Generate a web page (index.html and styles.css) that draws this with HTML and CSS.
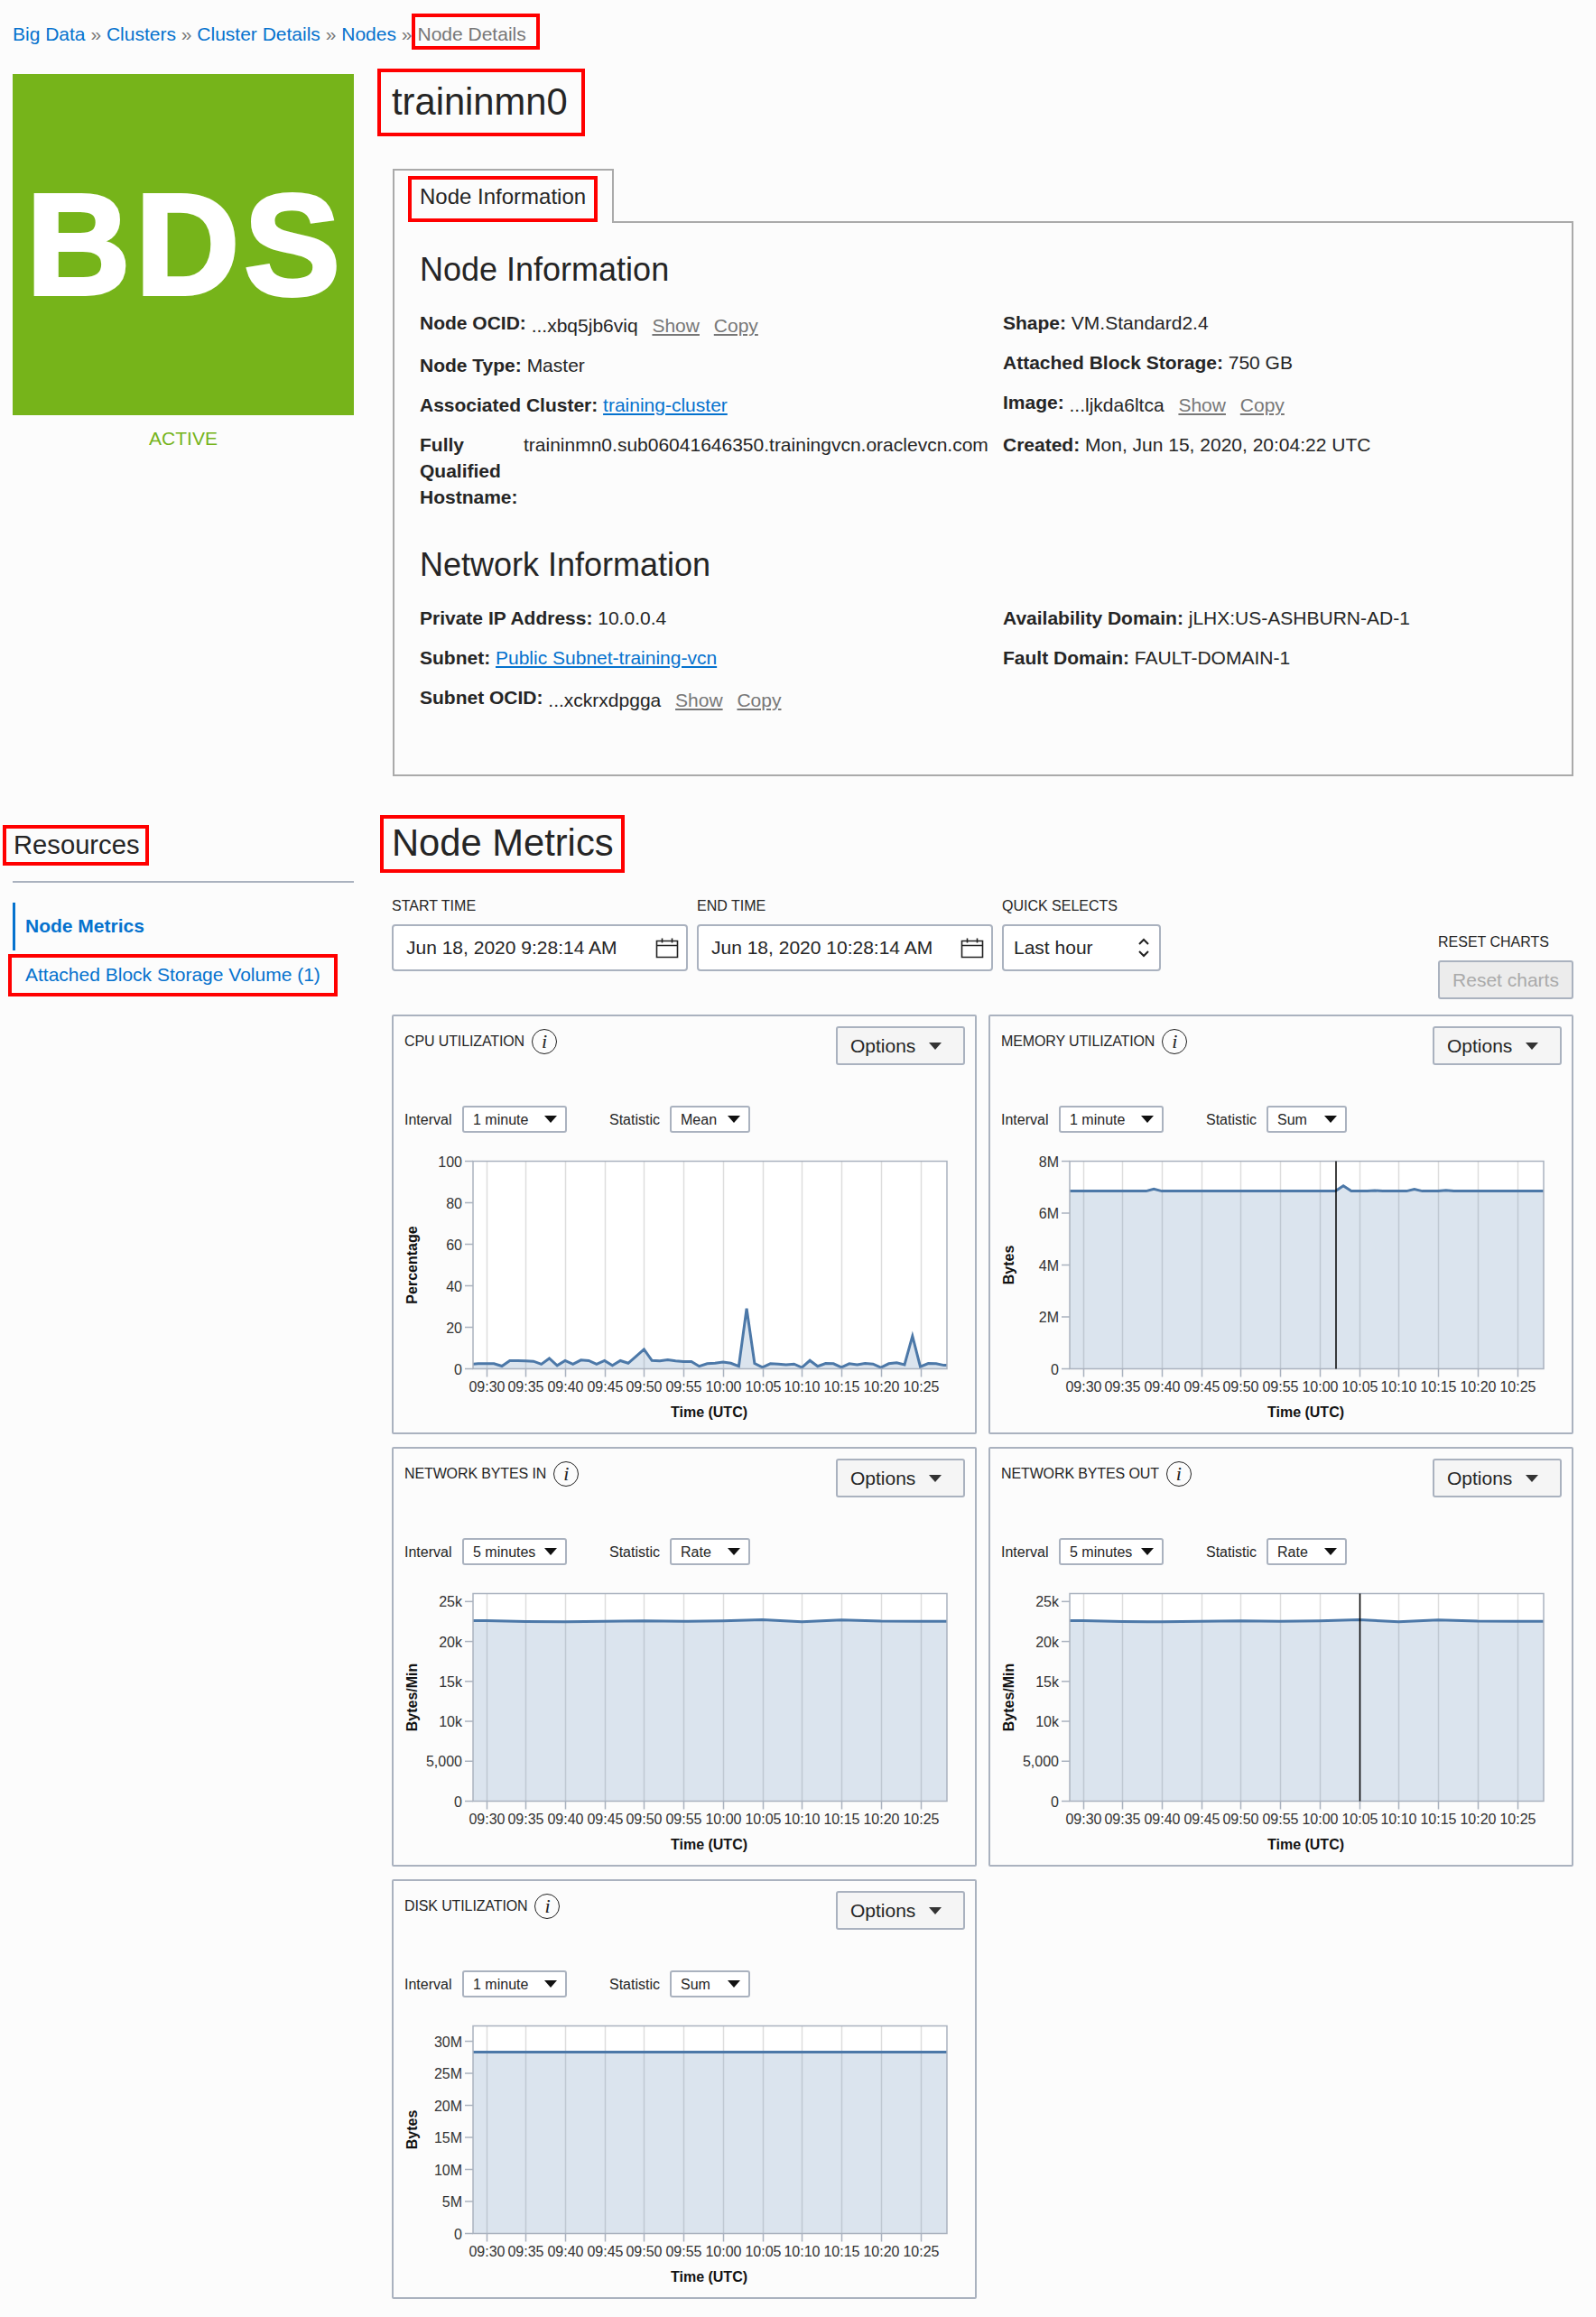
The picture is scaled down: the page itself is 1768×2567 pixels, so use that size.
FILE: index.html
```html
<!DOCTYPE html>
<html lang="en">
<head>
    <meta charset="UTF-8">
    <title>Node Details</title>
    <link rel="stylesheet" href="styles.css">
</head>
<body>
    <div class="breadcrumb">
        <a href="#">Big Data</a> <span class="sep">»</span>
        <a href="#">Clusters</a> <span class="sep">»</span>
        <a href="#">Cluster Details</a> <span class="sep">»</span>
        <a href="#">Nodes</a> <span class="sep">»</span><span class="mark crumb-current">Node Details</span>
    </div>

    <div class="section section-top">
        <div class="side">
            <div class="logo">BDS</div>
            <div class="status">ACTIVE</div>
        </div>
        <div class="content">
            <h1 class="mark page-title">traininmn0</h1>
            <div class="tab"><span class="mark tab-label">Node Information</span></div>
            <div class="tab-panel">
                <h2>Node Information</h2>
                <div class="info-grid">
                    <div>
                        <div class="row"><b>Node OCID:</b> <span class="ocid">...xbq5jb6viq <a class="action" href="#">Show</a> <a class="action" href="#">Copy</a></span></div>
                        <div class="row"><b>Node Type:</b> Master</div>
                        <div class="row"><b>Associated Cluster:</b> <a class="link" href="#">training-cluster</a></div>
                        <div class="row row-host">
                            <b class="host-label">Fully Qualified Hostname:</b>
                            <span>traininmn0.sub06041646350.trainingvcn.oraclevcn.com</span>
                        </div>
                    </div>
                    <div>
                        <div class="row"><b>Shape:</b> VM.Standard2.4</div>
                        <div class="row"><b>Attached Block Storage:</b> 750 GB</div>
                        <div class="row"><b>Image:</b> <span class="ocid">...ljkda6ltca <a class="action" href="#">Show</a> <a class="action" href="#">Copy</a></span></div>
                        <div class="row"><b>Created:</b> Mon, Jun 15, 2020, 20:04:22 UTC</div>
                    </div>
                </div>
                <h2 class="network-title">Network Information</h2>
                <div class="info-grid">
                    <div>
                        <div class="row"><b>Private IP Address:</b> 10.0.0.4</div>
                        <div class="row"><b>Subnet:</b> <a class="link" href="#">Public Subnet-training-vcn</a></div>
                        <div class="row"><b>Subnet OCID:</b> <span class="ocid">...xckrxdpgga <a class="action" href="#">Show</a> <a class="action" href="#">Copy</a></span></div>
                    </div>
                    <div>
                        <div class="row"><b>Availability Domain:</b> jLHX:US-ASHBURN-AD-1</div>
                        <div class="row"><b>Fault Domain:</b> FAULT-DOMAIN-1</div>
                    </div>
                </div>
            </div>
        </div>
    </div>

    <div class="section section-metrics">
        <div class="side">
            <h3 class="mark resources-title">Resources</h3>
            <div class="resources-nav">
                <a class="nav-item nav-active" href="#">Node Metrics</a>
                <a class="mark nav-item nav-marked" href="#">Attached Block Storage Volume (1)</a>
            </div>
        </div>
        <div class="content">
            <h1 class="mark page-title metrics-title">Node Metrics</h1>
            <div class="filters">
                <div class="filter filter-date">
                    <label>START TIME</label>
                    <div class="field">Jun 18, 2020 9:28:14 AM
                        <svg class="cal" width="26" height="24" viewBox="0 0 26 24"><path d="M1.5 4.5h23v18h-23zM1.5 9.5h23M7.5 1.5v5M18.5 1.5v5" fill="none" stroke="#222" stroke-width="1.6"/></svg>
                    </div>
                </div>
                <div class="filter filter-date">
                    <label>END TIME</label>
                    <div class="field">Jun 18, 2020 10:28:14 AM
                        <svg class="cal" width="26" height="24" viewBox="0 0 26 24"><path d="M1.5 4.5h23v18h-23zM1.5 9.5h23M7.5 1.5v5M18.5 1.5v5" fill="none" stroke="#222" stroke-width="1.6"/></svg>
                    </div>
                </div>
                <div class="filter filter-quick">
                    <label>QUICK SELECTS</label>
                    <div class="field">Last hour
                        <svg class="updown" width="14" height="22" viewBox="0 0 14 22"><path d="M2 7l5-5 5 5M2 15l5 5 5-5" fill="none" stroke="#222" stroke-width="2"/></svg>
                    </div>
                </div>
                <div class="filter filter-reset">
                    <label>RESET CHARTS</label>
                    <button class="reset-btn">Reset charts</button>
                </div>
            </div>

            <div class="chart-grid">
                <div class="card">
                    <div class="card-head">
                        <div class="card-title">CPU UTILIZATION <span class="info">i</span></div>
                        <button class="options-btn">Options <span class="caret"></span></button>
                    </div>
                    <div class="card-controls">
                        <span class="ctl-label">Interval</span>
                        <div class="select select-interval">1 minute <span class="caret"></span></div>
                        <span class="ctl-label ctl-stat">Statistic</span>
                        <div class="select select-stat">Mean <span class="caret"></span></div>
                    </div>
                    <svg class="chart" id="chart-cpu" width="620" height="310"></svg>
                </div>
                <div class="card">
                    <div class="card-head">
                        <div class="card-title">MEMORY UTILIZATION <span class="info">i</span></div>
                        <button class="options-btn">Options <span class="caret"></span></button>
                    </div>
                    <div class="card-controls">
                        <span class="ctl-label">Interval</span>
                        <div class="select select-interval">1 minute <span class="caret"></span></div>
                        <span class="ctl-label ctl-stat">Statistic</span>
                        <div class="select select-stat">Sum <span class="caret"></span></div>
                    </div>
                    <svg class="chart" id="chart-memory" width="620" height="310"></svg>
                </div>
                <div class="card">
                    <div class="card-head">
                        <div class="card-title">NETWORK BYTES IN <span class="info">i</span></div>
                        <button class="options-btn">Options <span class="caret"></span></button>
                    </div>
                    <div class="card-controls">
                        <span class="ctl-label">Interval</span>
                        <div class="select select-interval">5 minutes <span class="caret"></span></div>
                        <span class="ctl-label ctl-stat">Statistic</span>
                        <div class="select select-stat">Rate <span class="caret"></span></div>
                    </div>
                    <svg class="chart" id="chart-net-in" width="620" height="310"></svg>
                </div>
                <div class="card">
                    <div class="card-head">
                        <div class="card-title">NETWORK BYTES OUT <span class="info">i</span></div>
                        <button class="options-btn">Options <span class="caret"></span></button>
                    </div>
                    <div class="card-controls">
                        <span class="ctl-label">Interval</span>
                        <div class="select select-interval">5 minutes <span class="caret"></span></div>
                        <span class="ctl-label ctl-stat">Statistic</span>
                        <div class="select select-stat">Rate <span class="caret"></span></div>
                    </div>
                    <svg class="chart" id="chart-net-out" width="620" height="310"></svg>
                </div>
                <div class="card">
                    <div class="card-head">
                        <div class="card-title">DISK UTILIZATION <span class="info">i</span></div>
                        <button class="options-btn">Options <span class="caret"></span></button>
                    </div>
                    <div class="card-controls">
                        <span class="ctl-label">Interval</span>
                        <div class="select select-interval">1 minute <span class="caret"></span></div>
                        <span class="ctl-label ctl-stat">Statistic</span>
                        <div class="select select-stat">Sum <span class="caret"></span></div>
                    </div>
                    <svg class="chart" id="chart-disk" width="620" height="310"></svg>
                </div>
            </div>
        </div>
    </div>

    <script src="charts.js"></script>
</body>
</html>
```

FILE: styles.css
```css
/* General Reset */
* {
    margin: 0;
    padding: 0;
    box-sizing: border-box;
}
body {
    font-family: "Liberation Sans", Arial, sans-serif;
    font-size: 21px;
    line-height: 29px;
    background-color: #fcfcfc;
    color: #252525;
    padding: 15px 25px 0 14px;
}
a {
    color: #0572ce;
    text-decoration: none;
}
h1, h2, h3 {
    font-weight: normal;
}
/* Red annotation boxes */
.mark {
    border: 4px solid #ff0000;
}
/* Breadcrumb */
.breadcrumb {
    height: 40px;
    white-space: nowrap;
}
.sep {
    color: #777;
}
.crumb-current {
    display: inline-block;
    color: #777;
    height: 40px;
    padding: 4px 11px 3px 2px;
}
/* Page sections */
.section {
    display: flex;
    gap: 43px;
}
.side {
    width: 378px;
    flex-shrink: 0;
}
.content {
    flex: 1;
    min-width: 0;
}
.section-top {
    margin-top: 21px;
}
.section-top .side {
    padding-top: 6px;
}
.logo {
    width: 378px;
    height: 378px;
    background-color: #76b41a;
    color: #fff;
    font-size: 160px;
    font-weight: bold;
    letter-spacing: 5px;
    -webkit-text-stroke: 4px #fff;
    line-height: 378px;
    padding-left: 5px;
    text-align: center;
}
.status {
    color: #76b41a;
    text-align: center;
    margin-top: 11px;
}
.page-title {
    display: inline-block;
    font-size: 41.7px;
    line-height: 66px;
    padding: 0 15px 0 12px;
    margin-left: -17px;
    height: 75px;
}
/* Tab */
.tab {
    display: block;
    width: 245px;
    height: 60px;
    margin-top: 36px;
    padding: 6px 0 0 15px;
    border: 2px solid #aaa;
    border-bottom: none;
    background-color: #fcfcfc;
    position: relative;
    z-index: 1;
    margin-bottom: -2px;
}
.tab-label {
    display: block;
    width: 210px;
    height: 51px;
    font-size: 24px;
    line-height: 38px;
    padding-left: 9px;
    white-space: nowrap;
}
.tab-panel {
    border: 2px solid #aaa;
    padding: 30px 28px 53px;
}
.tab-panel h2 {
    font-size: 36px;
    line-height: 44px;
    margin-bottom: 22px;
}
.tab-panel h2.network-title {
    margin-top: 24px;
    margin-bottom: 22px;
}
.info-grid {
    display: grid;
    grid-template-columns: 646px 1fr;
}
.row {
    margin-bottom: 15px;
}
.row b {
    font-weight: bold;
}
.ocid {
    vertical-align: -3px;
}
.action {
    color: #777;
    text-decoration: underline;
    margin-left: 10px;
}
.link {
    text-decoration: underline;
}
.row-host {
    display: flex;
}
.host-label {
    width: 115px;
    flex-shrink: 0;
}
/* Metrics section */
.section-metrics {
    margin-top: 43px;
}
.section-metrics .side {
    padding-top: 11px;
}
.resources-title {
    display: inline-block;
    font-size: 29.2px;
    line-height: 37px;
    height: 45px;
    padding: 0 6px 0 8px;
    margin-left: -11px;
}
.resources-nav {
    margin-top: 17px;
    padding-top: 22px;
    border-top: 2px solid #aab2bf;
}
.nav-item {
    display: block;
    padding-left: 14px;
}
.nav-active {
    height: 53px;
    line-height: 51px;
    border-left: 3px solid #0572ce;
    font-weight: bold;
    padding-left: 11px;
}
.nav-marked {
    width: 365px;
    height: 47px;
    line-height: 37px;
    margin: 4px 0 0 -5px;
    padding-left: 15px;
}
.page-title.metrics-title {
    height: 64px;
    line-height: 54px;
    display: inline-block;
    vertical-align: top;
    margin-left: -14px;
    padding: 0 8px 0 9px;
}
.filters {
    display: flex;
    gap: 10px;
    margin: 27px 0 0 -1px;
}
.filter label {
    display: block;
    font-size: 16px;
    line-height: 20px;
    margin-bottom: 10px;
}
.filter-date {
    width: 328px;
}
.filter-quick {
    width: 176px;
}
.filter-reset {
    margin-left: auto;
    width: 150px;
    padding-top: 40px;
}
.filter-reset label {
    margin-bottom: 10px;
    white-space: nowrap;
}
.field {
    height: 52px;
    border: 2px solid #aab2bf;
    border-radius: 4px;
    background-color: #fff;
    padding: 0 8px 0 14px;
    line-height: 50px;
    display: flex;
    justify-content: space-between;
    align-items: center;
}
.filter-quick .field {
    padding: 0 10px 0 11px;
}
.reset-btn {
    display: block;
    width: 150px;
    height: 43px;
    font: inherit;
    color: #aaa;
    background-color: #ececec;
    border: 2px solid #aab2bf;
    border-radius: 3px;
}
/* Chart cards */
.chart-grid {
    display: grid;
    grid-template-columns: 648px 648px;
    gap: 14px 13px;
    margin: 17px 0 0 -1px;
}
.card {
    height: 465px;
    border: 2px solid #aab2bf;
    border-radius: 2px;
    padding: 11px 11px 0 12px;
}
.card-head {
    display: flex;
    justify-content: space-between;
    align-items: flex-start;
}
.card-title {
    font-size: 16px;
    letter-spacing: -0.12px;
    line-height: 28px;
    margin-top: 3px;
    display: flex;
    align-items: center;
    gap: 8px;
}
.info {
    width: 28px;
    height: 28px;
    border: 1.5px solid #222;
    border-radius: 50%;
    font-family: "Liberation Serif", serif;
    font-style: italic;
    font-size: 22px;
    line-height: 25px;
    text-align: center;
}
.options-btn {
    width: 143px;
    height: 43px;
    font: inherit;
    color: #252525;
    background-color: #f5f5f5;
    border: 2px solid #aab2bf;
    border-radius: 3px;
    padding: 0 14px;
    display: flex;
    gap: 15px;
    align-items: center;
}
.caret {
    width: 0;
    height: 0;
    border-left: 7px solid transparent;
    border-right: 7px solid transparent;
    border-top: 8px solid #111;
}
.options-btn .caret {
    border-top-color: #333;
}
.card-controls {
    display: flex;
    align-items: center;
    height: 30px;
    margin-top: 45px;
    font-size: 16px;
}
.ctl-label {
    white-space: nowrap;
}
.ctl-label:first-child {
    width: 64px;
}
.ctl-stat {
    width: 67px;
    margin-left: 47px;
}
.select {
    height: 30px;
    border: 2px solid #aab2bf;
    border-radius: 3px;
    background-color: #fff;
    padding: 0 9px 0 10px;
    display: flex;
    justify-content: space-between;
    align-items: center;
}
.select-interval {
    width: 116px;
}
.select-stat {
    width: 89px;
}
.chart {
    display: block;
    margin-top: 14px;
}
.tick-label {
    font-size: 16px;
    fill: #333;
}
.axis-title {
    font-size: 16px;
    font-weight: bold;
    fill: #111;
}
```

FILE: charts.js
```js
// Draws the five metric charts (same x axis, 09:28 to 10:28)
const PLOT_X = 76, PLOT_W = 525, PLOT_Y = 17.5, PLOT_H = 230;
const MIN_PX = 8.746;
const TIME_LABELS = ['09:30', '09:35', '09:40', '09:45', '09:50', '09:55',
    '10:00', '10:05', '10:10', '10:15', '10:20', '10:25'];

function minuteX(m) {
    return PLOT_X + 14.5 + (m - 2) * MIN_PX;
}

function everyMinute(values) {
    return values.map((v, i) => [i, v]);
}

const cpuValues = [2.2, 2.5, 2.5, 2.5, 1.3, 3.9, 3.9, 3.8, 3.6, 2.2, 5, 1.6, 3.9, 2.2, 4.2, 3.9,
    2.2, 3.9, 1.6, 3.9, 2.7, 6, 9.4, 4, 3.8, 4.3, 3.8, 3.5, 3.5, 1.2, 2.5, 2.7, 3.2, 2.7, 1.2,
    29, 2.6, 0.7, 2.5, 2.3, 2, 2.3, 0.6, 4, 1.2, 2.6, 2.5, 0.7, 2.5, 1.9, 2.6, 2.3, 0.6, 2.5,
    2.9, 2, 15.8, 1, 2.6, 2.5, 1.7];

const memoryValues = [];
for (let m = 0; m <= 61; m++) {
    memoryValues.push(6.85);
}
memoryValues[11] = 6.93;
memoryValues[35] = 7.05;
memoryValues[39] = 6.87;
memoryValues[44] = 6.92;
memoryValues[48] = 6.88;

const netPoints = [[0, 22.61], [2, 22.61], [7, 22.5], [12, 22.46], [17, 22.53], [22, 22.59], [27, 22.53],
    [32, 22.57], [37, 22.72], [42, 22.46], [47, 22.69], [52, 22.55], [57, 22.53], [61, 22.53]];

const charts = {
    'chart-cpu': {
        title: 'Percentage', max: 100, ticks: [[0, '0'], [20, '20'], [40, '40'], [60, '60'], [80, '80'], [100, '100']],
        points: everyMinute(cpuValues.concat(1.7))
    },
    'chart-memory': {
        title: 'Bytes', max: 8, ticks: [[0, '0'], [2, '2M'], [4, '4M'], [6, '6M'], [8, '8M']],
        points: everyMinute(memoryValues), marker: 295
    },
    'chart-net-in': {
        title: 'Bytes/Min', max: 26, ticks: [[0, '0'], [5, '5,000'], [10, '10k'], [15, '15k'], [20, '20k'], [25, '25k']],
        points: netPoints
    },
    'chart-net-out': {
        title: 'Bytes/Min', max: 26, ticks: [[0, '0'], [5, '5,000'], [10, '10k'], [15, '15k'], [20, '20k'], [25, '25k']],
        points: netPoints, marker: 321.5
    },
    'chart-disk': {
        title: 'Bytes', max: 32.4, ticks: [[0, '0'], [5, '5M'], [10, '10M'], [15, '15M'], [20, '20M'], [25, '25M'], [30, '30M']],
        points: [[0, 28.3], [61, 28.3]]
    }
};

function drawChart(id, chart) {
    const bottom = PLOT_Y + PLOT_H;
    const valueY = v => PLOT_Y + PLOT_H * (1 - v / chart.max);
    let svg = `<clipPath id="${id}-clip"><rect x="${PLOT_X}" y="${PLOT_Y}" width="${PLOT_W}" height="${PLOT_H}"/></clipPath>`;
    svg += `<rect x="${PLOT_X}" y="${PLOT_Y}" width="${PLOT_W}" height="${PLOT_H}" fill="#fff"/>`;

    // vertical grid and x axis
    TIME_LABELS.forEach((label, i) => {
        const x = Math.round(minuteX(2 + i * 5)) + 0.5;
        svg += `<line x1="${x}" x2="${x}" y1="${PLOT_Y}" y2="${bottom}" stroke="#ddd" stroke-width="1.5"/>`;
        svg += `<line x1="${x}" x2="${x}" y1="${bottom}" y2="${bottom + 9}" stroke="#aab2bf" stroke-width="1.5"/>`;
        svg += `<text class="tick-label" x="${x}" y="${bottom + 25}" text-anchor="middle">${label}</text>`;
    });

    // area and line
    const coords = chart.points.map(p => `${minuteX(p[0]).toFixed(1)},${valueY(p[1]).toFixed(1)}`);
    const first = minuteX(chart.points[0][0]).toFixed(1);
    const last = minuteX(chart.points[chart.points.length - 1][0]).toFixed(1);
    svg += `<g clip-path="url(#${id}-clip)">`;
    svg += `<polygon points="${first},${bottom} ${coords.join(' ')} ${last},${bottom}" fill="#4c78a8" fill-opacity="0.2"/>`;
    svg += `<polyline points="${coords.join(' ')}" fill="none" stroke="#4c78a8" stroke-width="3"/>`;
    svg += '</g>';

    // y axis
    chart.ticks.forEach(tick => {
        const y = valueY(tick[0]);
        svg += `<line x1="${PLOT_X - 9}" x2="${PLOT_X}" y1="${y}" y2="${y}" stroke="#aab2bf" stroke-width="1.5"/>`;
        svg += `<text class="tick-label" x="${PLOT_X - 12}" y="${y + 6}" text-anchor="end">${tick[1]}</text>`;
    });
    svg += `<rect x="${PLOT_X}" y="${PLOT_Y}" width="${PLOT_W}" height="${PLOT_H}" fill="none" stroke="#aab2bf" stroke-width="1.5"/>`;

    if (chart.marker) {
        const x = PLOT_X + chart.marker;
        svg += `<line x1="${x}" x2="${x}" y1="${PLOT_Y}" y2="${bottom}" stroke="#000" stroke-width="1.5"/>`;
    }

    svg += `<text class="axis-title" x="${PLOT_X + PLOT_W / 2 - 1}" y="${bottom + 53}" text-anchor="middle">Time (UTC)</text>`;
    svg += `<text class="axis-title" transform="translate(14 ${PLOT_Y + PLOT_H / 2}) rotate(-90)" text-anchor="middle">${chart.title}</text>`;
    document.getElementById(id).innerHTML = svg;
}

Object.keys(charts).forEach(id => drawChart(id, charts[id]));
```
